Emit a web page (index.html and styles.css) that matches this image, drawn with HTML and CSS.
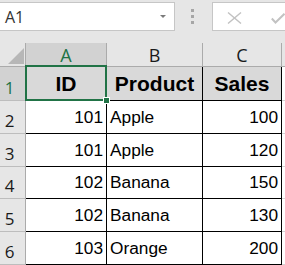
FILE: index.html
```html
<!DOCTYPE html>
<html lang="en">
<head>
    <meta charset="UTF-8">
    <title>Sheet</title>
    <link rel="stylesheet" href="styles.css">
</head>
<body>

    <div class="formula-bar">
        <div class="name-box">
            <span>A1</span>
            <svg class="drop" width="6" height="3" viewBox="0 0 6 3"><path d="M0 0H6L3 3Z" fill="#7a7a7a"/></svg>
        </div>
        <div class="grip"><i></i><i></i><i></i></div>
        <div class="fx-box">
            <svg class="cancel" width="15" height="12" viewBox="0 0 15 12">
                <path d="M1 0.5L14 11.5M14 0.5L1 11.5" stroke="#c2c2c2" stroke-width="1.4" fill="none"/>
            </svg>
            <svg class="enter" width="14" height="11" viewBox="0 0 14 11">
                <path d="M0.8 5.5L4.5 9.5L13.5 0.8" stroke="#c2c2c2" stroke-width="2" fill="none"/>
            </svg>
        </div>
    </div>

    <div class="sheet">
        <div class="corner"><svg width="16" height="16" viewBox="0 0 16 16"><path d="M16 0V16H0Z" fill="#b7b7b7"/></svg></div>
        <div class="col-head sel">A</div>
        <div class="col-head">B</div>
        <div class="col-head">C</div>
        <div class="col-head"></div>

        <div class="row-head sel">1</div>
        <div class="cell title active">ID<span class="handle"></span></div>
        <div class="cell title">Product</div>
        <div class="cell title">Sales</div>
        <div class="cell blank"></div>

        <div class="row-head">2</div>
        <div class="cell num">101</div>
        <div class="cell">Apple</div>
        <div class="cell num">100</div>
        <div class="cell blank"></div>

        <div class="row-head">3</div>
        <div class="cell num">101</div>
        <div class="cell">Apple</div>
        <div class="cell num">120</div>
        <div class="cell blank"></div>

        <div class="row-head">4</div>
        <div class="cell num">102</div>
        <div class="cell">Banana</div>
        <div class="cell num">150</div>
        <div class="cell blank"></div>

        <div class="row-head">5</div>
        <div class="cell num">102</div>
        <div class="cell">Banana</div>
        <div class="cell num">130</div>
        <div class="cell blank"></div>

        <div class="row-head">6</div>
        <div class="cell num">103</div>
        <div class="cell">Orange</div>
        <div class="cell num">200</div>
        <div class="cell blank"></div>
    </div>

</body>
</html>
```

FILE: styles.css
```css
* {
    box-sizing: border-box;
}
body {
    margin: 0;
    width: 285px;
    height: 265px;
    overflow: hidden;
    background: #fff;
    font-family: "Liberation Sans", Arial, sans-serif;
}
.formula-bar {
    height: 43px;
    padding-top: 2px;
    display: flex;
    align-items: flex-start;
    background: #e6e6e6;
}
.name-box {
    width: 176px;
    height: 29px;
    padding: 0 8px 0 5px;
    display: flex;
    align-items: center;
    justify-content: space-between;
    background: #fff;
    border: 1px solid #c6c6c6;
    border-left: none;
    font-family: "Open Sans", sans-serif;
    font-size: 16px;
    color: #333;
}
.grip {
    margin: 7px 0 0 16px;
    display: flex;
    flex-direction: column;
    gap: 3px;
}
.grip i {
    width: 3px;
    height: 3px;
    background: #a6a6a6;
}
.fx-box {
    flex: 1;
    height: 29px;
    margin-left: 18px;
    display: flex;
    align-items: flex-start;
    background: #fff;
    border: 1px solid #c6c6c6;
    border-right: none;
}
.cancel {
    margin: 9px 0 0 14px;
}
.enter {
    margin: 10px 0 0 29px;
}
.sheet {
    display: grid;
    grid-template-columns: 26px 81px 96px 79px 1fr;
    grid-template-rows: 24px 34px 33px 33px 32px 33px 33px;
}
.corner {
    display: flex;
    justify-content: flex-end;
    align-items: flex-end;
    padding: 0 1px 2px 0;
    background: #e6e6e6;
    border-right: 1px solid #ababab;
    border-bottom: 1px solid #ababab;
}
.col-head {
    display: flex;
    align-items: center;
    justify-content: center;
    background: #e6e6e6;
    border-right: 1px solid #ababab;
    border-bottom: 1px solid #ababab;
    font-family: "Open Sans", sans-serif;
    font-size: 18px;
    color: #1a1a1a;
}
.row-head {
    display: flex;
    align-items: flex-end;
    justify-content: center;
    padding: 0 6px 4px 0;
    background: #e6e6e6;
    border-right: 1px solid #ababab;
    border-bottom: 1px solid #bdbdbd;
    font-family: "Open Sans", sans-serif;
    font-size: 17px;
    line-height: 16px;
    color: #1a1a1a;
}
.sel {
    background: #d2d2d2;
    color: #217346;
}
.cell {
    display: flex;
    align-items: center;
    padding: 0 3px;
    border-right: 1px solid #000;
    border-bottom: 1px solid #000;
    font-size: 17.3px;
    color: #000;
}
.num {
    justify-content: flex-end;
}
.title {
    justify-content: center;
    background: #d9d9d9;
    font-size: 21px;
    font-weight: bold;
}
.blank {
    border-right: none;
    border-bottom: 1px solid #d4d4d4;
}
.title.blank {
    background: #fff;
}
.active {
    position: relative;
}
.active::after {
    content: "";
    position: absolute;
    inset: -2px -1px -1px -1px;
    border: 2px solid #217346;
}
.handle {
    position: absolute;
    right: -4px;
    bottom: -4px;
    width: 7px;
    height: 7px;
    z-index: 1;
    background: #217346;
    border: 1px solid #fff;
}
```
